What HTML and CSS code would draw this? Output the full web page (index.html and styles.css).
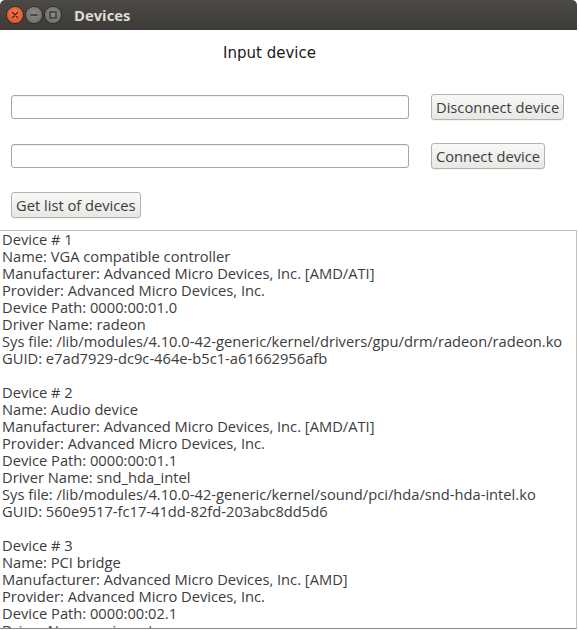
FILE: index.html
```html
<!DOCTYPE html>
<html>
<head>
<meta charset="utf-8">
<title>Devices</title>
<link rel="stylesheet" href="styles.css">
</head>
<body>
<div class="window">
  <div class="titlebar">
    <div class="controls">
      <span class="ctl close"><svg width="16" height="16" viewBox="0 0 16 16"><path d="M5.5 5.5 L10.5 10.5 M10.5 5.5 L5.5 10.5" stroke="#3a2a22" stroke-width="1.4" stroke-linecap="round"/></svg></span>
      <span class="ctl min"><svg width="16" height="16" viewBox="0 0 16 16"><path d="M4.5 8 H11.5" stroke="#3c3b37" stroke-width="1.6"/></svg></span>
      <span class="ctl max"><svg width="16" height="16" viewBox="0 0 16 16"><rect x="5" y="5" width="6" height="6" fill="none" stroke="#3c3b37" stroke-width="1.4"/></svg></span>
    </div>
    <span class="title">Devices</span>
  </div>
  <div class="content">
    <div class="heading">Input device</div>
    <div class="row">
      <div class="field"></div>
      <button class="btn">Disconnect device</button>
    </div>
    <div class="row">
      <div class="field"></div>
      <button class="btn">Connect device</button>
    </div>
    <div class="row single">
      <button class="btn">Get list of devices</button>
    </div>
    <div class="list">Device # 1
Name: VGA compatible controller
Manufacturer: Advanced Micro Devices, Inc. [AMD/ATI]
Provider: Advanced Micro Devices, Inc.
Device Path: 0000:00:01.0
Driver Name: radeon
Sys file: /lib/modules/4.10.0-42-generic/kernel/drivers/gpu/drm/radeon/radeon.ko
GUID: e7ad7929-dc9c-464e-b5c1-a61662956afb

Device # 2
Name: Audio device
Manufacturer: Advanced Micro Devices, Inc. [AMD/ATI]
Provider: Advanced Micro Devices, Inc.
Device Path: 0000:00:01.1
Driver Name: snd_hda_intel
Sys file: /lib/modules/4.10.0-42-generic/kernel/sound/pci/hda/snd-hda-intel.ko
GUID: 560e9517-fc17-41dd-82fd-203abc8dd5d6

Device # 3
Name: PCI bridge
Manufacturer: Advanced Micro Devices, Inc. [AMD]
Provider: Advanced Micro Devices, Inc.
Device Path: 0000:00:02.1
Driver Name: pcieport</div>
  </div>
  <div class="edge"></div>
</div>
</body>
</html>
```
FILE: styles.css
```css
html, body {
  margin: 0;
  padding: 0;
  background: #ffffff;
  overflow: hidden;
}
body {
  width: 579px;
  height: 630px;
  font-family: "Open Sans", "DejaVu Sans", sans-serif;
  color: #3c3c3c;
}
.window {
  position: relative;
  width: 577px;
  height: 630px;
  overflow: hidden;
}
.titlebar {
  height: 30px;
  background: linear-gradient(#4b4a45, #3c3b37);
  border-radius: 5px 5px 0 0;
  display: flex;
  align-items: center;
  padding-left: 7px;
}
.controls {
  display: flex;
  gap: 3px;
}
.ctl {
  width: 16px;
  height: 16px;
  border-radius: 50%;
  display: flex;
}
.close {
  background: radial-gradient(circle at 50% 40%, #f47a4f, #e2491f);
  box-shadow: 0 0 0 1px #2e2d2a;
}
.min, .max {
  background: radial-gradient(circle at 50% 40%, #8a8984, #6b6a65);
  box-shadow: 0 0 0 1px #2e2d2a;
}
.title {
  margin-left: 13px;
  font-family: "Open Sans", "DejaVu Sans", sans-serif;
  font-weight: 700;
  font-size: 14.8px;
  color: #dfdbd2;
}
.content {
  display: flex;
  flex-direction: column;
}
.heading {
  font-family: "DejaVu Sans", sans-serif;
  font-size: 15px;
  color: #1a1a1a;
  text-align: center;
  padding-top: 14px;
  height: 25px;
  margin-bottom: 25px;
  padding-right: 38px;
}
.row {
  display: flex;
  align-items: center;
  padding-left: 11px;
  gap: 22px;
  height: 26px;
  margin-bottom: 23px;
}
.row.single {
  margin-bottom: 12px;
}
.field {
  width: 396px;
  height: 22px;
  border: 1px solid #a5a5a5;
  border-radius: 3px;
  background: #fff;
  box-shadow: inset 0 1px 1px rgba(0,0,0,0.06);
}
.btn {
  height: 26px;
  padding: 0 4px;
  border: 1px solid #b4b2ad;
  border-radius: 3px;
  background: linear-gradient(#f8f8f7, #e8e7e4);
  font-family: "Open Sans", "DejaVu Sans", sans-serif;
  font-size: 14.7px;
  color: #3c3c3c;
  box-shadow: 0 1px 0 rgba(0,0,0,0.05);
}
.list {
  border-top: 1px solid #c2c2c2;
  border-right: 1px solid #c2c2c2;
  border-bottom: 1px solid #8a8a8a;
  white-space: pre;
  font-size: 14.7px;
  line-height: 17px;
  padding: 0 2px;
  height: 397px;
  overflow: hidden;
}
.edge {
  position: absolute;
  right: -2px;
  top: 30px;
  width: 2px;
  height: 550px;
  background: #f07746;
}
```
